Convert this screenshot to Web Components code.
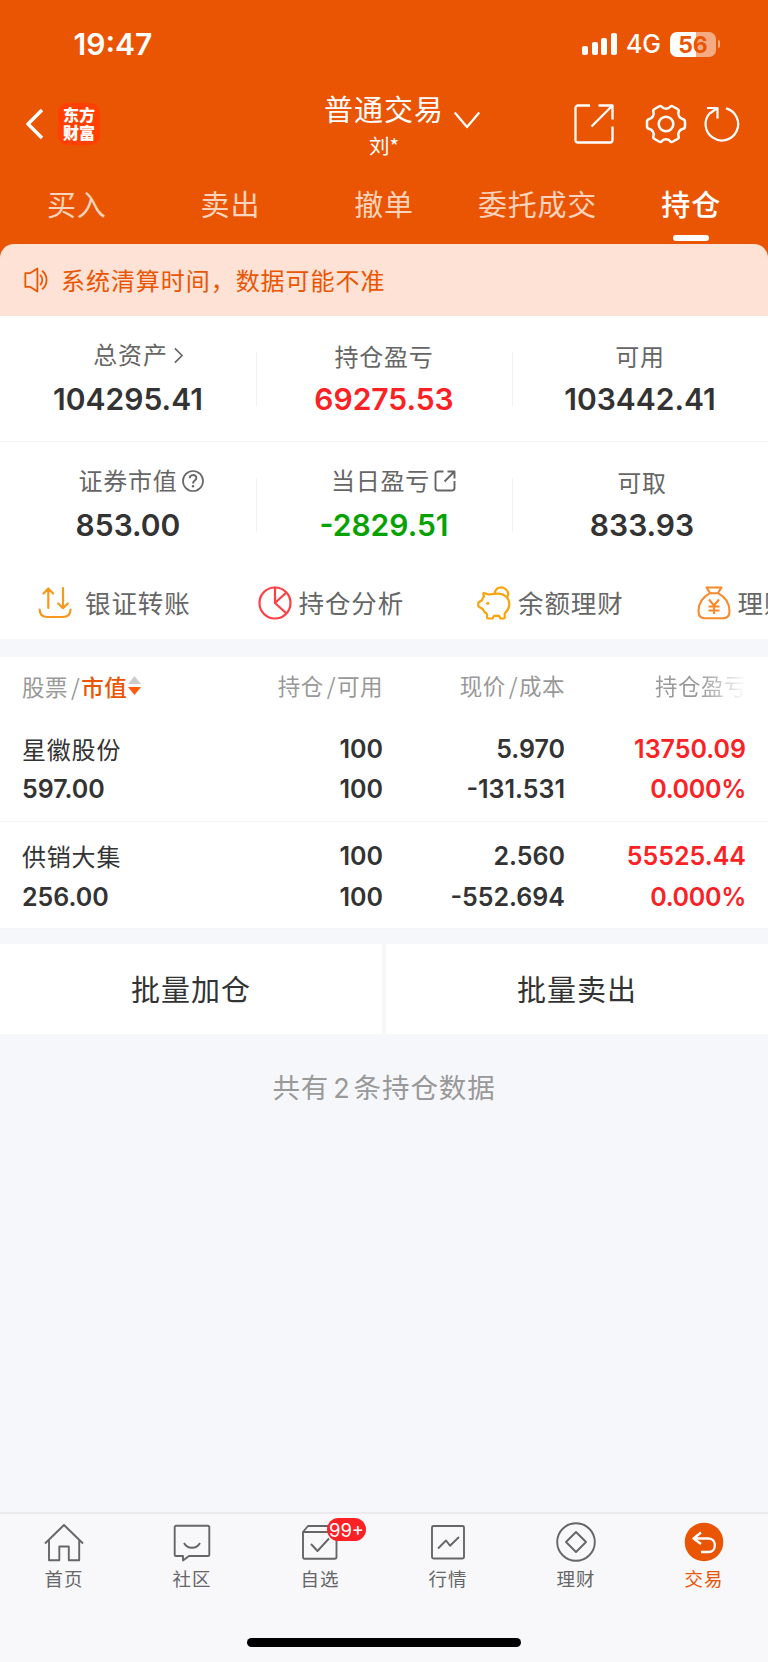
<!DOCTYPE html>
<html lang="zh-CN">
<head>
<meta charset="utf-8">
<title>持仓</title>
<style>
  :root {
    --color-primary: #ea5504;
    --color-up: #fb2124;
    --color-down: #05a200;
    --color-text: #333;
    --color-label: #666;
    --color-muted: #999;
    --color-line: #f4f4f6;
    --color-page: #f6f7fa;
    --font-cjk: "Noto Sans CJK SC", sans-serif;
    --font-num: Inter, sans-serif;
  }
  body { margin: 0; background: var(--color-page); font-family: var(--font-cjk); }
</style>
</head>
<body>
<trade-app></trade-app>

<script>
const ICONS = {
  back: ['0 0 18 32', '<path d="M16 2 2 16l14 14" stroke-width="3.5"/>'],
  down: ['0 0 28 18', '<path d="M1 1.500l13 15.500 13-15.500" stroke-width="2.400"/>'],
  share: ['0 0 40 40', '<path d="M16 1.500H4a2.500 2.500 0 0 0-2.500 2.500v32A2.500 2.500 0 0 0 4 38.500h32a2.500 2.500 0 0 0 2.500-2.500V22.500M24.500 1.500h14V15.500M38 2 17.500 22.500" stroke-width="2.300"/>'],
  gear: ['0 0 40 40', '<path d="M13 2.500c1.300-.9 2.300-.5 3 .5 2 2.300 6 2.300 8 0 .7-1 1.700-1.400 3-.5l4.500 2.500c1.200.7 1.500 1.800 1 3-.9 3 1.200 6.400 4 7 1.400.3 2.500 1.400 2.500 2.800v4.400c0 1.400-1.100 2.500-2.500 2.800-2.800.6-4.900 4-4 7 .5 1.200.2 2.300-1 3L27 37.500c-1.300.9-2.300.5-3-.5-2-2.300-6-2.300-8 0-.7 1-1.700 1.400-3 .5L8.500 35c-1.200-.7-1.500-1.800-1-3 .9-3-1.200-6.400-4-7C2.100 24.700 1 23.600 1 22.200v-4.400C1 16.400 2.100 15.300 3.500 15c2.800-.6 4.900-4 4-7-.5-1.200-.2-2.300 1-3z" stroke-width="2.500"/><circle cx="20" cy="20" r="7.300" stroke-width="2.500"/>'],
  refresh: ['0 0 36 36', '<path d="M22 2.400A16.300 16.300 0 1 1 6.500 6.500" stroke-width="2.200"/><path d="M3 2h10.500v10.500M13.300 2 6.500 7" stroke-width="2.200"/>'],
  speaker: ['0 0 26 28', '<g stroke-width="1.900"><path d="M1.500 6.500H7L14.500 1.500v25L7 21.500H1.500z"/><path d="M17.500 8.500c3 3 3 8 0 11M19.500 4c6.500 5 6.500 15 0 20"/></g>'],
  right: ['0 0 10 18', '<path d="M1 1l8 8-8 8" stroke-width="1.900"/>'],
  help: ['0 0 22 22', '<circle cx="11" cy="11" r="10" stroke-width="1.700"/><path d="M7.700 8.300c.1-4.300 6.700-4.200 6.700-.3 0 2.500-3.400 2.700-3.400 5.500" stroke-width="1.900"/><circle cx="11" cy="16.200" r="1.200" fill="currentColor" stroke="none"/>'],
  open: ['0 0 22 22', '<path d="M9.500 1.500H4A2.500 2.500 0 0 0 1.500 4v14A2.500 2.500 0 0 0 4 20.500h14a2.500 2.500 0 0 0 2.500-2.500v-7M13.500 1.500h7v7M20 2l-9.500 9.500" stroke-width="1.900"/>'],
  transfer: ['0 0 34 34', '<g stroke="#f7991f" stroke-width="2.200" stroke-linecap="round"><path d="M10.300 22V3M5.500 7.500l4.800-5 4.800 5M25 2v20M20.200 17.500l4.800 4.700 4.800-4.700M1.700 23.500c0 5 2.500 7.500 7.500 7.500h15.500c5 0 7.800-2.500 7.800-7.500"/></g>'],
  pie: ['0 0 34 34', '<g stroke="#fb4044" stroke-width="2.200"><circle cx="17" cy="17" r="15.500"/><path d="M17 1.500V17L28.500 27.500M17 17 28.300 6.500"/></g>'],
  pig: ['0 0 34 34', '<g stroke="#f9a30b" stroke-width="2.200"><path d="M17 7.800c6-.8 10 .2 12.500 3.200 4.500 5 3.300 12-1.800 16.500v4c0 .8-.5 1-1 1h-3.200l-1.500-2.700h-5L15.500 32.500H11c-.7 0-1-.5-1-1V28c-2-1-3.300-2.700-4.300-5L2 20.800c-.7-.4-.8-1-.8-1.800l.2-2.500L5 14.200c.3-1.500 1-2.600 2-3.500L6.300 8c0-1 .6-1.100 1.500-.8L12 8.500z"/><path d="M17.500 8c1-6.500 7-8.300 11-5 3 2.500 3.500 5.500 1.500 8.500"/></g><circle cx="10.800" cy="17.300" r="1.600" fill="#f9a30b" stroke="none"/>'],
  bag: ['0 0 34 34', '<g stroke="#f9892a" stroke-width="2.100"><path d="M9.500 1.500h15l-3.700 5.700h-7.600zM13 7.200C6 11 1.500 17.500 1.500 25c0 5 2 7.200 6 7.200h19c4 0 6-2.200 6-7.200C32.500 17.500 28 11 21 7.200"/><path d="M12 13.500l5 6 5-6M11.500 20.500h11M11.500 24.500h11M17 19.500v8.500"/></g>'],
  home: ['0 0 40 40', '<path d="M1 21.500 20 3l19 18.500M5 18v20.300h10.300V24.500h9.500v13.800H35.200V18"/>'],
  chat: ['0 0 40 40', '<path d="M4 3.800h32a1.300 1.300 0 0 1 1.300 1.300v27.600a1.300 1.300 0 0 1-1.300 1.300H17l-6 4.500V34H4a1.300 1.300 0 0 1-1.300-1.300V5.100A1.300 1.300 0 0 1 4 3.800z"/><path d="M12 21c3.500 6.300 12.500 6.300 16 0"/>'],
  picks: ['0 0 40 40', '<path d="M3 10 8 4h23l5 6M3 10h33.500v25a1.700 1.700 0 0 1-1.700 1.700H4.700A1.700 1.700 0 0 1 3 35zM11 22l6.500 7L29 16.500"/>'],
  market: ['0 0 40 40', '<rect x="4" y="4" width="32" height="32.500" rx="1.500"/><path d="M10 26.500l8-8 4 5.200 9-8.700"/>'],
  wealth: ['0 0 40 40', '<circle cx="20" cy="20" r="18.800"/><path d="M20 10 30 20 20 30 10 20z" stroke-linejoin="round"/>'],
  trade: ['0 0 40 40', '<circle cx="20" cy="20" r="19.300" fill="#ea5504" stroke="none"/><path d="M17 10.500 9.500 16.500l7.500 5.500M10 16.500h14.500c8.500 0 8.500 13.500 0 13.500H17" stroke="#fff" stroke-width="2.300"/>'],
};

class AppIcon extends HTMLElement {
  connectedCallback() {
    const [viewBox, shapes] = ICONS[this.getAttribute('name')];
    this.attachShadow({ mode: 'open' }).innerHTML = `
      <style>
        :host { display: block; flex: none; }
        svg { display: block; width: 100%; height: 100%; overflow: visible; }
      </style>
      <svg viewBox="${viewBox}" fill="none" stroke="currentColor" stroke-width="1.900" stroke-linejoin="round">${shapes}</svg>
    `;
  }
}
customElements.define('app-icon', AppIcon);

// Registers an element whose shadow root is a copy of the given markup
function define(tag, html, setup) {
  const template = document.createElement('template');
  template.innerHTML = html;
  customElements.define(tag, class extends HTMLElement {
    constructor() {
      super();
      this.attachShadow({ mode: 'open' });
      this.shadowRoot.appendChild(template.content.cloneNode(true));
    }
    connectedCallback() {
      if (setup) setup(this, this.shadowRoot);
    }
  });
}

define('status-bar', `
  <style>
    :host {
      display: flex; align-items: center; height: 88px; box-sizing: border-box;
      padding: 0 48px 0 73.500px; color: #fff; font-family: var(--font-num);
    }
    .time { flex: 1; font-size: 30px; font-weight: 600; }
    .signal { display: flex; align-items: flex-end; gap: 3.500px; height: 22px; margin-right: 9px; }
    .signal i { width: 6px; border-radius: 2px; background: #fff; }
    .net { font-size: 25px; font-weight: 500; margin-right: 9px; }
    .battery {
      width: 46px; height: 25px; border-radius: 7px; text-align: center; line-height: 26px;
      background: linear-gradient(90deg, #fff 56%, #f5aa82 56%);
      color: var(--color-primary); font-size: 23px; font-weight: 700;
    }
    .nub { width: 2.500px; height: 8px; margin-left: 1.500px; border-radius: 0 3px 3px 0; background: #f5aa82; }
  </style>
  <span class="time">19:47</span>
  <span class="signal"><i style="height:9px"></i><i style="height:13px"></i><i style="height:17.500px"></i><i style="height:22px"></i></span>
  <span class="net">4G</span>
  <span class="battery">56</span><span class="nub"></span>
`);

define('nav-header', `
  <style>
    :host {
      display: grid; grid-template-columns: 1fr auto 1fr; height: 80px; color: #fff;
    }
    .left, .right { display: flex; align-items: center; height: 71px; }
    .left { padding-left: 26px; gap: 14px; }
    .right { justify-content: flex-end; padding-right: 28px; }
    .logo {
      width: 42px; height: 42px; box-sizing: border-box; padding: 2px 0 0 5px; border-radius: 9px; background: #ff4000;
      font-size: 16px; line-height: 18px; font-weight: 900; white-space: nowrap;
    }
    .title { position: relative; text-align: center; width: 120px; }
    .name { font-size: 29px; line-height: 40px; letter-spacing: 1px; white-space: nowrap; }
    .user { font-size: 20.500px; line-height: 28px; margin-top: 3px; }
    .down { position: absolute; left: 129px; top: 23px; width: 28px; height: 17px; }
  </style>
  <div class="left">
    <app-icon name="back" style="width:18px;height:32px"></app-icon>
    <div class="logo">东方<br>财富</div>
  </div>
  <div class="title">
    <div class="name">普通交易</div>
    <div class="user">刘*</div>
    <app-icon class="down" name="down"></app-icon>
  </div>
  <div class="right">
    <app-icon name="share" style="width:40px;height:40px;margin-right:32px"></app-icon>
    <app-icon name="gear" style="width:40px;height:40px;margin-right:18px"></app-icon>
    <app-icon name="refresh" style="width:36px;height:36px"></app-icon>
  </div>
`);

define('trade-tab', `
  <style>
    :host {
      display: flex; flex-direction: column; align-items: center; flex: 1 1 0; min-width: 0;
      color: #fcd3bd; font-size: 29px; line-height: 40px; letter-spacing: .8px; white-space: nowrap;
      padding-top: 15px;
    }
    :host([active]) { color: #fff; font-weight: 500; }
    i { display: none; width: 36px; height: 6px; margin-top: 12px; border-radius: 3px; background: #fff; }
    :host([active]) i { display: block; }
  </style>
  <span><slot></slot></span><i></i>
`);

define('notice-bar', `
  <style>
    :host {
      display: flex; align-items: center; height: 72px; box-sizing: border-box; padding-left: 23px;
      border-radius: 14px 14px 0 0; background: #fde2d5; color: var(--color-primary);
      font-size: 24px; letter-spacing: .95px;
    }
    app-icon { width: 26px; height: 26px; margin-right: 12px; }
    span { line-height: 30px; margin-top: -1px; }
  </style>
  <app-icon name="speaker"></app-icon><span><slot></slot></span>
`);

define('stat-cell', `
  <style>
    :host { display: flex; flex-direction: column; align-items: center; position: relative; }
    :host(:not(:first-of-type))::before {
      content: ""; position: absolute; left: 0; top: 36px; width: 1px; height: 54px; background: #f2f2f4;
    }
    .label {
      display: flex; align-items: center; height: 34px; margin-top: 24px;
      color: var(--color-label); font-size: 24px; letter-spacing: .8px;
    }
    .label span { margin-top: -3px; }
    :host([icon]) .label { margin-top: 22px; margin-bottom: 2px; }
    .value {
      margin-top: 8px; height: 36px; line-height: 35px; color: var(--color-text);
      font-family: var(--font-num); font-size: 30px; font-weight: 600;
    }
    :host([tone=up]) .value { color: var(--color-up); }
    :host([tone=down]) .value { color: var(--color-down); }
    app-icon { width: 22px; height: 22px; margin-left: 4px; }
  </style>
  <div class="label"><span><slot></slot></span></div>
  <div class="value"></div>
`, (host, root) => {
  root.querySelector('.value').textContent = host.getAttribute('value');
  const icon = host.getAttribute('icon');
  if (icon) {
    const el = document.createElement('app-icon');
    el.setAttribute('name', icon);
    if (icon === 'right') el.style.cssText = 'width:9px;height:17px;margin-left:6px';
    root.querySelector('.label').append(el);
    root.querySelector('.label').style.paddingLeft = host.getAttribute('shift') + 'px';
  }
});

define('quick-link', `
  <style>
    :host {
      display: flex; align-items: center; flex: none; width: 219.500px; color: var(--color-label);
      font-size: 25.500px; letter-spacing: .9px; white-space: nowrap;
    }
    app-icon { width: 34px; height: 34px; margin-right: 7px; }
    span { margin-top: -4px; }
    :host([icon=transfer]) app-icon { margin-right: 13px; }
  </style>
  <span><slot></slot></span>
`, (host, root) => {
  const el = document.createElement('app-icon');
  el.setAttribute('name', host.getAttribute('icon'));
  root.insertBefore(el, root.querySelector('span'));
});

define('holdings-head', `
  <style>
    :host {
      display: grid; grid-template-columns: 201px 160px 182px 181px; padding: 0 22px;
      height: 57px; line-height: 56px; color: var(--color-muted); font-size: 22.500px; letter-spacing: .5px;
    }
    span { text-align: right; white-space: nowrap; }
    .sort { display: flex; align-items: center; }
    b { color: var(--color-primary); font-weight: 500; }
    u { text-decoration: none; padding: 0 1px 0 3px; }
    svg { width: 13px; height: 19px; margin-left: 1px; }
    .last {
      text-align: left; overflow: hidden; padding-left: 90px; color: transparent;
      background: linear-gradient(90deg, #999 0 75%, #fff 100%); background-clip: text; -webkit-background-clip: text;
    }
  </style>
  <span class="sort">股票<u>/</u><b>市值</b>
    <svg viewBox="0 0 13 19"><path d="M0 8 6.500 0 13 8z" fill="#ccc"/><path d="M0 11h13L6.500 19z" fill="#ff5a0a"/></svg></span>
  <span>持仓<u>/</u>可用</span>
  <span>现价<u>/</u>成本</span>
  <span class="last">持仓盈亏</span>
`);

define('holding-row', `
  <style>
    :host {
      display: grid; grid-template-columns: 201px 160px 182px 181px; grid-template-rows: 40.500px 41px;
      height: 107.500px; box-sizing: border-box; padding: 14.500px 22px 0;
      border-bottom: 1px solid var(--color-line); color: var(--color-text);
      font-family: var(--font-num); font-size: 25px; font-weight: 600; line-height: 41px;
    }
    span { text-align: right; }
    span:nth-of-type(4n+1) { text-align: left; }
    .name { font-family: var(--font-cjk); font-size: 24px; font-weight: 400; letter-spacing: .8px; line-height: 40px; }
    .up { color: var(--color-up); }
    .rate { letter-spacing: -.3px; }
  </style>
`, (host, root) => {
  host.getAttribute('cells').split(',').forEach((text, i) => {
    const span = document.createElement('span');
    span.textContent = text;
    if (i === 0) span.className = 'name';
    if (i === 3) span.className = 'up';
    if (i === 7) span.className = 'up rate';
    root.append(span);
  });
});

define('batch-button', `
  <style>
    :host {
      display: block; background: #fff; text-align: center; height: 90px; line-height: 88px;
      color: var(--color-text); font-size: 29px; letter-spacing: 1px;
    }
  </style>
  <slot></slot>
`);

define('nav-item', `
  <style>
    :host {
      display: flex; flex-direction: column; align-items: center; flex: 1; position: relative;
      padding-top: 7.500px; color: var(--color-label); font-size: 18.500px; letter-spacing: .9px;
    }
    :host([icon=trade]) { color: var(--color-primary); }
    app-icon { width: 40px; height: 40px; }
    span { line-height: 26px; margin-top: 3px; }
    em {
      position: absolute; left: 71px; top: 4px; width: 39px; height: 23px; border-radius: 12px;
      background: var(--color-up); color: #fff; text-align: center; letter-spacing: 0;
      font: 400 18.500px/24px var(--font-num);
    }
  </style>
  <span><slot></slot></span>
`, (host, root) => {
  const el = document.createElement('app-icon');
  el.setAttribute('name', host.getAttribute('icon'));
  root.insertBefore(el, root.querySelector('span'));
  if (host.hasAttribute('badge')) {
    const badge = document.createElement('em');
    badge.textContent = host.getAttribute('badge');
    root.append(badge);
  }
});

define('trade-app', `
  <style>
    :host { display: flex; flex-direction: column; width: 768px; height: 1662px; overflow: hidden; }
    header { background: var(--color-primary); height: 258px; }
    .tabs { display: flex; height: 76px; }
    main { flex: 1; }
    notice-bar { margin-top: -14px; }
    .white { background: #fff; }
    .stats { display: grid; grid-template-columns: repeat(3, 256px); height: 125px; }
    .stats + .stats { border-top: 1px solid var(--color-line); }
    .links { display: flex; height: 72px; padding-left: 38px; overflow: hidden; }
    .holdings { margin-top: 18px; }
    .batch { display: grid; grid-template-columns: 382px 382px; gap: 4px; margin-top: 15px; }
    .count { margin: 0; padding-top: 31px; text-align: center; color: var(--color-muted); font-size: 27.500px; line-height: 42px; letter-spacing: .9px; }
    .count i { font: 400 27px/30px var(--font-num); padding: 0 3px 0 4px; }
    footer { height: 148px; border-top: 2px solid #ebebed; background: #f8f8fb; }
    nav { display: flex; height: 124px; }
    .bar { width: 274px; height: 9px; margin: 0 auto; border-radius: 5px; background: #000; }
  </style>
  <header>
    <status-bar></status-bar>
    <nav-header></nav-header>
    <div class="tabs">
      <trade-tab>买入</trade-tab>
      <trade-tab>卖出</trade-tab>
      <trade-tab>撤单</trade-tab>
      <trade-tab>委托成交</trade-tab>
      <trade-tab active>持仓</trade-tab>
    </div>
  </header>
  <main>
    <notice-bar>系统清算时间，数据可能不准</notice-bar>
    <section class="white">
      <div class="stats">
        <stat-cell value="104295.41" icon="right" shift="20">总资产</stat-cell>
        <stat-cell value="69275.53" tone="up">持仓盈亏</stat-cell>
        <stat-cell value="103442.41">可用</stat-cell>
      </div>
      <div class="stats">
        <stat-cell value="853.00" icon="help" shift="26">证券市值</stat-cell>
        <stat-cell value="-2829.51" tone="down" icon="open" shift="19">当日盈亏</stat-cell>
        <stat-cell value="833.93" style="padding-left:4px">可取</stat-cell>
      </div>
      <div class="links">
        <quick-link icon="transfer">银证转账</quick-link>
        <quick-link icon="pie">持仓分析</quick-link>
        <quick-link icon="pig">余额理财</quick-link>
        <quick-link icon="bag">理财</quick-link>
      </div>
    </section>
    <section class="holdings white">
      <holdings-head></holdings-head>
      <holding-row cells="星徽股份,100,5.970,13750.09,597.00,100,-131.531,0.000%"></holding-row>
      <holding-row cells="供销大集,100,2.560,55525.44,256.00,100,-552.694,0.000%"></holding-row>
    </section>
    <div class="batch">
      <batch-button>批量加仓</batch-button>
      <batch-button>批量卖出</batch-button>
    </div>
    <p class="count">共有<i>2</i>条持仓数据</p>
  </main>
  <footer>
    <nav>
      <nav-item icon="home">首页</nav-item>
      <nav-item icon="chat">社区</nav-item>
      <nav-item icon="picks" badge="99+">自选</nav-item>
      <nav-item icon="market">行情</nav-item>
      <nav-item icon="wealth">理财</nav-item>
      <nav-item icon="trade">交易</nav-item>
    </nav>
    <div class="bar"></div>
  </footer>
`);
</script>
</body>
</html>
